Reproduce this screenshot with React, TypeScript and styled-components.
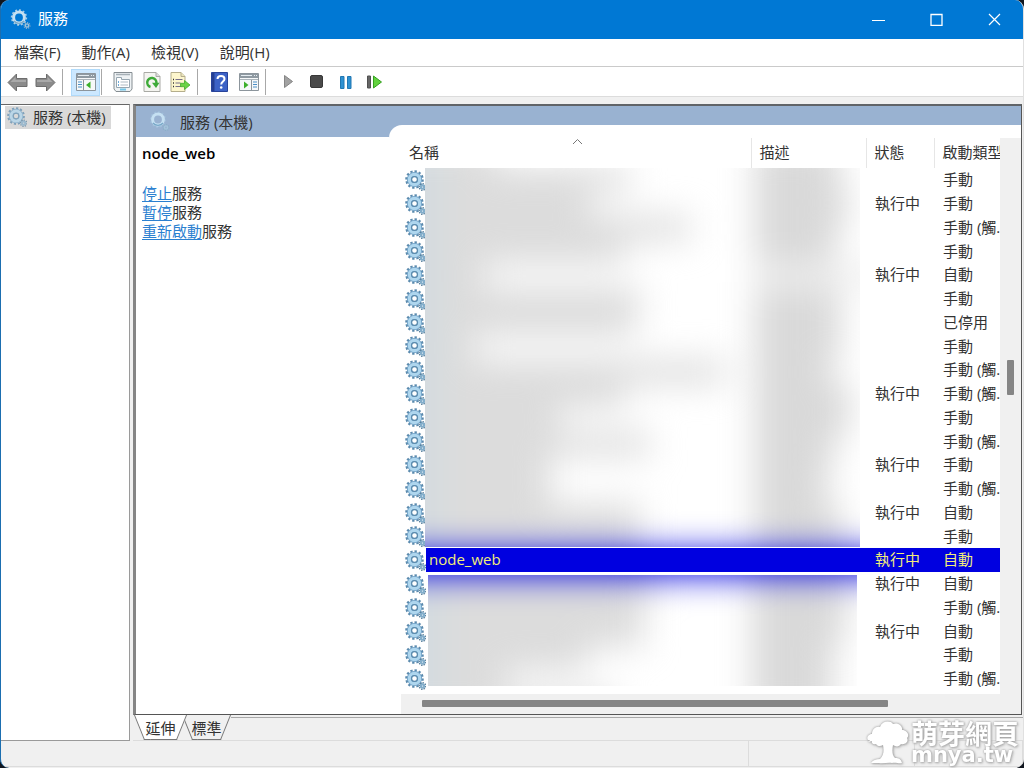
import React from "react";
import styled, { createGlobalStyle, css } from "styled-components";

const GlobalStyle = createGlobalStyle`
  * { box-sizing: border-box; }
  body {
    margin: 0;
    background: #10161f;
    color: #333;
    font-family: "Open Sans", "Noto Sans CJK TC", sans-serif;
    font-size: 15px;
    line-height: 20px;
  }
  button { font: inherit; color: inherit; background: none; border: 0; padding: 0; margin: 0; }
`;

const AppWindow = styled.div`
  position: relative;
  display: flex;
  flex-direction: column;
  min-height: 100vh;
  background: #f0f0f0;
  border-left: 1px solid #1b6eb0;
  border-right: 1px solid #e0e0e0;
  border-radius: 9px;
  overflow: hidden;
`;

const TitleBar = styled.header`
  display: flex;
  align-items: center;
  height: 39px;
  padding-left: 9px;
  background: #0078d4;
  color: #fff;
`;

const Title = styled.h1`
  flex: 1;
  margin: 0 0 0 7px;
  padding-bottom: 3px;
  font-size: 15px;
  font-weight: 400;
`;

const CaptionButton = styled.button`
  display: grid;
  place-items: center;
  width: 58px;
  height: 39px;
`;

const MenuBar = styled.nav`
  display: flex;
  align-items: center;
  gap: 21px;
  height: 28px;
  padding: 0 0 1px 13px;
  background: #fff;
  border-bottom: 1px solid #cacaca;
`;

const ToolBar = styled.div`
  display: flex;
  align-items: center;
  height: 30px;
  padding: 1px 0 0 2px;
  background: #fff;
  border-bottom: 1px solid #dcdcdc;
`;

const ToolButton = styled.button<{ $active?: boolean; $narrow?: boolean }>`
  display: grid;
  place-items: center;
  width: ${(p) => (p.$narrow ? 28 : 29)}px;
  height: 27px;
  ${(p) => p.$active && css`background: #cce8ff; box-shadow: inset 0 0 0 1px #b0dafa;`}
`;

const Separator = styled.span<{ $before?: number; $after?: number }>`
  width: 1px;
  height: 26px;
  margin: 0 ${(p) => p.$after ?? 0}px 0 ${(p) => p.$before ?? 0}px;
  background: #a8a8a8;
`;

const Workspace = styled.main`
  flex: 1;
  display: flex;
  gap: 3px;
  padding-top: 7px;
`;

const Tree = styled.aside`
  width: 129px;
  padding: 1px 4px;
  background: #fff;
  border: 1px solid #9a9a9a;
  border-top-color: #666;
  border-left: 0;
`;

const TreeItem = styled.button`
  display: flex;
  align-items: center;
  gap: 6px;
  height: 23px;
  padding: 0 5px 1px 2px;
  background: #d9d9d9;
  white-space: nowrap;
`;

const Right = styled.section`
  flex: 1;
  min-width: 0;
  display: flex;
  flex-direction: column;
`;

const Panel = styled.div`
  flex: 1;
  display: flex;
  margin-right: 1px;
  background: #99b2d1;
  border: 1px solid #555;
  border-top: 2px solid #606468;
  border-left: 3px solid #858585;
`;

const Details = styled.div`
  width: 253px;
  display: flex;
  flex-direction: column;
`;

const DetailsHead = styled.div`
  display: flex;
  align-items: center;
  gap: 10px;
  height: 31px;
  padding-left: 13px;
`;

const DetailsBody = styled.div`
  flex: 1;
  padding: 6px 6px 0;
  background: #fff;
`;

const ServiceName = styled.h2`
  margin: 0 0 21px;
  color: #000;
  font-size: 15px;
  font-weight: 600;
`;

const Action = styled.p`
  margin: 0;
  line-height: 19px;
  a { color: #2b80d0; text-underline-offset: 2px; }
`;

const ListPane = styled.div`
  flex: 1;
  min-width: 0;
  display: flex;
  flex-direction: column;
  margin-top: 19px;
  padding: 13px 0 0 12px;
  background: #fff;
  border-top-left-radius: 13px;
`;

const ListRow = styled.div`
  flex: 1;
  display: flex;
`;

const ListArea = styled.div`
  position: relative;
  flex: 1;
  min-width: 0;
  height: 555px;
  overflow: hidden;
`;

const ServiceTable = styled.table`
  width: 100%;
  border-collapse: collapse;
  table-layout: fixed;
`;

const Head = styled.th<{ $width?: number }>`
  width: ${(p) => (p.$width ? `${p.$width}px` : "auto")};
  height: 30px;
  padding: 0 0 2px 8px;
  border-left: 1px solid #e6e6e6;
  text-align: left;
  font-weight: 400;
  white-space: nowrap;
  &:first-child { border-left: 0; }
`;

const SortMark = styled.svg`
  position: absolute;
  top: 0;
  left: 171px;
`;

const Cell = styled.td<{ $selected?: boolean }>`
  padding: 0 0 2px 9px;
  white-space: nowrap;
  ${(p) => p.$selected && css`background: #0000e0; color: #f2ee7a;`}
`;

const NameCell = styled.td`
  padding: 0 0 0 4px;
`;

const NameLine = styled.div`
  display: flex;
  align-items: center;
  height: 24px;
`;

const ServiceRow = styled.tr`
  &:nth-child(4n) ${NameLine} { height: 23px; }
`;

const NameText = styled.span<{ $selected?: boolean }>`
  flex: 1;
  align-self: stretch;
  padding-left: 3px;
  line-height: 23px;
  ${(p) => p.$selected && css`background: #0000e0; color: #f2ee7a;`}
`;

const Redaction = styled.div<{ $top: number; $height: number; $inset: number }>`
  position: absolute;
  top: ${(p) => p.$top}px;
  left: ${(p) => 24 + p.$inset}px;
  right: ${(p) => 140 + p.$inset}px;
  height: ${(p) => p.$height}px;
  overflow: hidden;
  background: #fff;
`;

const Haze = styled.div<{ $shift: number }>`
  margin: ${(p) => p.$shift}px -60px 0;
  filter: blur(17px);
`;

const HazeRow = styled.div`
  display: grid;
  grid-template-columns: 1fr 165px;
  height: 24px;
`;

const HazeName = styled.span<{ $width: number }>`
  width: ${(p) => p.$width + 60}px;
  background: linear-gradient(90deg, #d2dbe0 60px, #dcdcdc 84px);
`;

const HazeText = styled.span<{ $width: number; $pale?: boolean }>`
  width: ${(p) => p.$width}px;
  background: ${(p) => (p.$pale ? "#f0f0f0" : "#d9d9d9")};
`;

const HazeSelection = styled.div`
  height: 38px;
  background: #0000e0;
`;

const VerticalBar = styled.div`
  width: 21px;
  padding: 222px 0 0 7px;
  background: #f0f0f0;
`;

const HorizontalBar = styled.div`
  height: 20px;
  padding: 6px 133px 0 21px;
  background: #f0f0f0;
`;

const Thumb = styled.div<{ $vertical?: boolean }>`
  width: ${(p) => (p.$vertical ? "7px" : "100%")};
  height: ${(p) => (p.$vertical ? 35 : 7)}px;
  border-radius: 1px;
  background: #858585;
`;

const ViewTabs = styled.div`
  display: flex;
  height: 26px;
  padding-left: 1px;
  border-bottom: 1px solid #dcdcdc;
`;

const ViewTab = styled.button<{ $active?: boolean }>`
  position: relative;
  z-index: ${(p) => (p.$active ? 1 : 0)};
  width: ${(p) => (p.$active ? 53 : 49)}px;
  height: 25px;
  margin-left: ${(p) => (p.$active ? 0 : -5)}px;
  &::before, &::after {
    content: "";
    position: absolute;
    z-index: -1;
    top: 0;
    bottom: 0;
    background: ${(p) => (p.$active ? "#fff" : "#f0f0f0")};
    border-bottom: 1px solid #777;
  }
  &::before { left: 5px; right: 40%; border-left: 1px solid #777; transform: skewX(22deg); }
  &::after { right: 5px; left: 40%; border-right: 1px solid #777; transform: skewX(-22deg); }
`;

const TabStripRest = styled.span`
  flex: 1;
  height: 1px;
  margin-top: 2px;
  background: #a8a8a8;
`;

const StatusBar = styled.footer`
  display: grid;
  grid-template-columns: 1fr 166px 108px;
  height: 27px;
  padding-bottom: 1px;
`;

const StatusCell = styled.span`
  border-right: 1px solid #dcdcdc;
  border-bottom: 1px solid #dcdcdc;
`;

const Watermark = styled.div`
  position: absolute;
  right: 4px;
  bottom: 4px;
  display: flex;
  align-items: center;
  gap: 2px;
  color: #fff;
  filter: drop-shadow(0 0 1px #999) drop-shadow(1px 1px 1px #bbb);
`;

const WatermarkText = styled.div`
  display: flex;
  flex-direction: column;
  font-weight: 700;
`;

const WatermarkName = styled.span`
  font-size: 27px;
  line-height: 27px;
`;

const WatermarkSite = styled.span`
  font-family: "DejaVu Sans", sans-serif;
  font-size: 21px;
  line-height: 17px;
`;

const Gear = ({ size = 21, pale = false }: { size?: number; pale?: boolean }) => (
  <svg width={size} height={size} viewBox="0 0 21 21" fill="none" aria-hidden="true" opacity={pale ? 0.7 : 1}>
    <circle cx="9.500" cy="9.500" r="8.200" stroke="#5b8aad" strokeWidth="2.200" pathLength="24" strokeDasharray="1.100 .9" />
    <circle cx="9.500" cy="9.500" r="5.200" stroke="#6a9dc4" strokeWidth="4.800" />
    <circle cx="9.500" cy="9.500" r="5.200" stroke="#aed6ee" strokeWidth="3.200" />
    <circle cx="9.500" cy="9.500" r="2.900" stroke="#5c8bad" strokeWidth="1.200" />
    <circle cx="17.500" cy="17" r="3.200" stroke="#567d99" strokeWidth="1.600" pathLength="16" strokeDasharray="1.100 .9" />
    <circle cx="17.500" cy="17" r="1.700" stroke="#83aecb" strokeWidth="2.200" />
  </svg>
);

const TitleGear = ({ soft = false }: { soft?: boolean }) => (
  <svg width="21" height="21" viewBox="0 0 21 21" fill="none" aria-hidden="true">
    <circle cx="9" cy="8.500" r="7.400" stroke="#a9cde6" strokeWidth="1.600" pathLength="24" strokeDasharray="1 1" opacity={soft ? 0.5 : 1} />
    <circle cx="9" cy="8.500" r="5.400" stroke="#c5e0f2" strokeWidth="3" />
    <path d="M4 12a6.500 6.500 0 0 0 10 0" stroke="#79a8c8" strokeWidth="1.200" />
    <circle cx="17" cy="16.500" r="2.800" stroke="#8bafc8" strokeWidth="1.600" pathLength="16" strokeDasharray="1 1" />
    <circle cx="17" cy="16.500" r="1.600" stroke="#a3c4da" strokeWidth="1.400" />
  </svg>
);

const Arrow = ({ flip = false }: { flip?: boolean }) => (
  <svg width="21" height="19" viewBox="0 0 21 19" aria-hidden="true">
    <path
      d="M1 9.500 9.500 1v4.500H20v8H9.500V18z"
      transform={flip ? "matrix(-1 0 0 1 21 0)" : undefined}
      fill="#8b8b8b"
      stroke="#6d6d6d"
      strokeLinejoin="round"
    />
    <path d="M3.500 9 8.500 4v3H19v2z" transform={flip ? "matrix(-1 0 0 1 21 0)" : undefined} fill="#a9a9a9" />
  </svg>
);

const PaneIcon = ({ right = false }: { right?: boolean }) => (
  <svg width="20" height="18" viewBox="0 0 20 18" aria-hidden="true">
    <path d="M.5.5h19v17H.5z" fill="#f6f8f9" stroke="#8c959c" />
    <path d="M1 1h18v4H1z" fill="#8f9aa2" />
    <path d="M2 2.500h11M15 2.500h1M17 2.500h1" stroke="#e6edf2" />
    <path d="M1 6.500h18" stroke="#aab3b9" />
    {right ? (
      <>
        <path d="M12.500 7v10" stroke="#8c959c" />
        <path d="M14 9h4M14 11.500h4M14 14h4" stroke="#4a8fc7" strokeWidth="1.200" />
        <path d="M5 8.500v7L9.500 12z" fill="#3caf2b" />
      </>
    ) : (
      <>
        <path d="M7.500 7v10" stroke="#8c959c" />
        <path d="M2 9h4M2 11.500h4M2 14h4" stroke="#4a8fc7" strokeWidth="1.200" />
        <path d="M14.500 8.500v7L10 12z" fill="#3caf2b" />
      </>
    )}
  </svg>
);

const PropertiesIcon = () => (
  <svg width="20" height="20" viewBox="0 0 20 20" aria-hidden="true">
    <path d="M1 .5h18v16.500l-2 2.500H3L1 17z" fill="#eef2f4" stroke="#858d92" />
    <path d="M3 2.500h14" stroke="#a7b1b7" strokeWidth="1.500" />
    <path d="M3.500 5.500h5v2h8v8h-13z" fill="#fff" stroke="#97a6b0" />
    <path d="M5 10h1M5 13h1" stroke="#3f91d0" strokeWidth="1.500" />
    <path d="M7.500 10H15M7.500 13H15" stroke="#adbac3" />
    <path d="M7 17.500h6" stroke="#73c6e8" strokeWidth="2" />
  </svg>
);

const RefreshIcon = () => (
  <svg width="18" height="20" viewBox="0 0 18 20" aria-hidden="true">
    <path d="M1 .5h12l4 4V19.500H1z" fill="#f4f4f0" stroke="#a9aaa5" />
    <path d="M13 .5v4h4" fill="#ddd" stroke="#a9aaa5" />
    <path d="M7.500 15A4.600 4.600 0 1 1 13.400 11" fill="none" stroke="#3eaa38" strokeWidth="2.500" />
    <path d="M9 10.800h7.500L13 16z" fill="#3eaa38" />
  </svg>
);

const ExportIcon = () => (
  <svg width="21" height="20" viewBox="0 0 21 20" aria-hidden="true">
    <path d="M1 .5h10l4 4V19.500H1z" fill="#fdf6cd" stroke="#b5ae8c" />
    <path d="M11 .5v4h4" fill="#ece5bd" stroke="#b5ae8c" />
    <path d="M3 7.500h1M3 11h1M3 14.500h1" stroke="#333" strokeWidth="1.500" />
    <path d="M5.500 7.500h7M5.500 11h5M5.500 14.500h6" stroke="#777089" />
    <path d="M10.500 11.300h4V8.500l5.500 4.500-5.500 4.500v-2.800h-4z" fill="#6bd345" stroke="#43ad2a" strokeWidth=".8" />
  </svg>
);

const HelpIcon = () => (
  <svg width="17" height="20" viewBox="0 0 17 20" aria-hidden="true">
    <path d="M.5.5h16v19H.5z" fill="#3c62c6" stroke="#28439a" />
    <path d="M1 1h2.500v18H1z" fill="#243e92" />
    <path d="M6.500 7c0-4 7-4 7 0 0 2.500-3.300 2.500-3.300 5.500" fill="none" stroke="#fff" strokeWidth="2" />
    <circle cx="10.200" cy="15.500" r="1.300" fill="#fff" />
  </svg>
);

const TreeLogo = () => (
  <svg width="42" height="43" viewBox="0 0 42 43" fill="#fff" aria-hidden="true">
    <path d="M1 19c-2-3 1-6 4-6 0-5 4-8 8-7 2-6 10-7 13-3 5-2 10 2 9 6 5 0 8 5 5 8 2 4-2 7-6 6-2 3-5 3-8 1-1 5-1 10 2 13 4 0 6 1 7 5-3 1-6-1-10 0-4-1-9 1-13 0l-8 0c2-3 5-4 9-4 4-4 4-9 3-14-3 2-6 1-7-1-3 1-5-1-4-3l-4 1c3-2 2-2 0-2z" />
  </svg>
);

type Service = { status?: string; start: string; name?: string };

const RUN = "執行中";
const MANUAL = "手動";
const AUTO = "自動";
const TRIGGER = "手動 (觸.";

const services: Service[] = [
  { start: MANUAL },
  { status: RUN, start: MANUAL },
  { start: TRIGGER },
  { start: MANUAL },
  { status: RUN, start: AUTO },
  { start: MANUAL },
  { start: "已停用" },
  { start: MANUAL },
  { start: TRIGGER },
  { status: RUN, start: TRIGGER },
  { start: MANUAL },
  { start: TRIGGER },
  { status: RUN, start: MANUAL },
  { start: TRIGGER },
  { status: RUN, start: AUTO },
  { start: MANUAL },
  { name: "node_web", status: RUN, start: AUTO },
  { status: RUN, start: AUTO },
  { start: TRIGGER },
  { status: RUN, start: AUTO },
  { start: MANUAL },
  { start: TRIGGER },
  { start: "" },
];

type Hidden = [name: number, text: number];

const hiddenAbove: Hidden[] = [
  [70, 85],
  [205, 85], [165, 95], [265, 85], [200, 80], [60, 0], [215, 85], [210, 85], [50, 85],
  [300, 75], [200, 95], [135, 95], [225, 80], [125, 75], [125, 70], [215, 85], [215, 90],
];
const hiddenBelow: Hidden[] = [[225, 95], [215, 95], [215, 90], [160, 80], [80, 80], [190, 80]];

const HazeRows = ({ rows }: { rows: Hidden[] }) => (
  <>
    {rows.map(([name, text], i) => (
      <HazeRow key={i}>
        <HazeName $width={name} />
        <HazeText $width={text || 165} $pale={!text} />
      </HazeRow>
    ))}
  </>
);

export default function App() {
  return (
    <AppWindow>
      <GlobalStyle />
      <TitleBar>
        <TitleGear />
        <Title>服務</Title>
        <CaptionButton aria-label="最小化">
          <svg width="13" height="13" stroke="#fff"><path d="M0 7.500h13" /></svg>
        </CaptionButton>
        <CaptionButton aria-label="最大化">
          <svg width="13" height="13" stroke="#fff" fill="none"><path d="M1 1.500h11v11H1z" strokeWidth="1.300" /></svg>
        </CaptionButton>
        <CaptionButton aria-label="關閉">
          <svg width="13" height="13" stroke="#fff"><path d="M1 1l11 11M12 1 1 12" strokeWidth="1.200" /></svg>
        </CaptionButton>
      </TitleBar>

      <MenuBar>
        <button>檔案(F)</button>
        <button>動作(A)</button>
        <button>檢視(V)</button>
        <button>說明(H)</button>
      </MenuBar>

      <ToolBar>
        <ToolButton $narrow aria-label="上一頁"><Arrow /></ToolButton>
        <ToolButton aria-label="下一頁"><Arrow flip /></ToolButton>
        <Separator $before={2} $after={8} />
        <ToolButton $active aria-label="主控台樹狀目錄"><PaneIcon /></ToolButton>
        <Separator $before={1} $after={6} />
        <ToolButton aria-label="內容"><PropertiesIcon /></ToolButton>
        <ToolButton aria-label="重新整理"><RefreshIcon /></ToolButton>
        <ToolButton $narrow aria-label="匯出清單"><ExportIcon /></ToolButton>
        <Separator $before={3} $after={7} />
        <ToolButton aria-label="說明"><HelpIcon /></ToolButton>
        <ToolButton aria-label="動作窗格"><PaneIcon right /></ToolButton>
        <Separator $before={2} $after={8} />
        <ToolButton aria-label="啟動服務">
          <svg width="12" height="16"><path d="M1.500 1.500v12l8-6z" fill="#a2a2a2" stroke="#858585" /></svg>
        </ToolButton>
        <ToolButton $narrow aria-label="停止服務">
          <svg width="14" height="14"><rect x=".5" y=".5" width="12" height="12" rx="1.500" fill="#4a4a4a" stroke="#383838" /></svg>
        </ToolButton>
        <ToolButton aria-label="暫停服務">
          <svg width="12" height="13"><path d="M.5.5h3.500v12H.5zM7.500.5H11v12H7.500z" fill="#2f92d2" stroke="#2177b2" /></svg>
        </ToolButton>
        <ToolButton aria-label="重新啟動服務">
          <svg width="16" height="14"><path d="M.5 1h3v12h-3z" fill="#666" stroke="#505050" /><path d="M6.500 1v12l8-6z" fill="#62d23e" stroke="#35a020" /></svg>
        </ToolButton>
      </ToolBar>

      <Workspace>
        <Tree>
          <TreeItem><Gear size={20} pale />服務 (本機)</TreeItem>
        </Tree>
        <Right>
          <Panel>
            <Details>
              <DetailsHead><TitleGear soft /><span>服務 (本機)</span></DetailsHead>
              <DetailsBody>
                <ServiceName>node_web</ServiceName>
                <Action><a href="#stop">停止</a>服務</Action>
                <Action><a href="#pause">暫停</a>服務</Action>
                <Action><a href="#restart">重新啟動</a>服務</Action>
              </DetailsBody>
            </Details>
            <ListPane>
              <ListRow>
                <ListArea>
                  <ServiceTable>
                    <thead>
                      <tr>
                        <Head>名稱</Head>
                        <Head $width={115}>描述</Head>
                        <Head $width={68}>狀態</Head>
                        <Head $width={66}>啟動類型</Head>
                      </tr>
                    </thead>
                    <tbody>
                      {services.map((s, i) => (
                        <ServiceRow key={i}>
                          <NameCell>
                            <NameLine>
                              <Gear />
                              <NameText $selected={!!s.name}>{s.name}</NameText>
                            </NameLine>
                          </NameCell>
                          <Cell $selected={!!s.name} />
                          <Cell $selected={!!s.name}>{s.status}</Cell>
                          <Cell $selected={!!s.name}>{s.start}</Cell>
                        </ServiceRow>
                      ))}
                    </tbody>
                  </ServiceTable>
                  <SortMark width="11" height="7" fill="none" stroke="#777"><path d="M1 6l4.500-4.500L10 6" /></SortMark>
                  <Redaction $top={30} $height={379} $inset={0}>
                    <Haze $shift={-24}>
                      <HazeRows rows={hiddenAbove} />
                      <HazeSelection />
                    </Haze>
                  </Redaction>
                  <Redaction $top={437} $height={111} $inset={3}>
                    <Haze $shift={-38}>
                      <HazeSelection />
                      <HazeRows rows={hiddenBelow} />
                    </Haze>
                  </Redaction>
                </ListArea>
                <VerticalBar><Thumb $vertical /></VerticalBar>
              </ListRow>
              <HorizontalBar><Thumb /></HorizontalBar>
            </ListPane>
          </Panel>
          <ViewTabs>
            <ViewTab $active>延伸</ViewTab>
            <ViewTab>標準</ViewTab>
            <TabStripRest />
          </ViewTabs>
        </Right>
      </Workspace>

      <StatusBar>
        <StatusCell />
        <StatusCell />
        <StatusCell />
      </StatusBar>

      <Watermark>
        <TreeLogo />
        <WatermarkText>
          <WatermarkName>萌芽網頁</WatermarkName>
          <WatermarkSite>mnya.tw</WatermarkSite>
        </WatermarkText>
      </Watermark>
    </AppWindow>
  );
}
